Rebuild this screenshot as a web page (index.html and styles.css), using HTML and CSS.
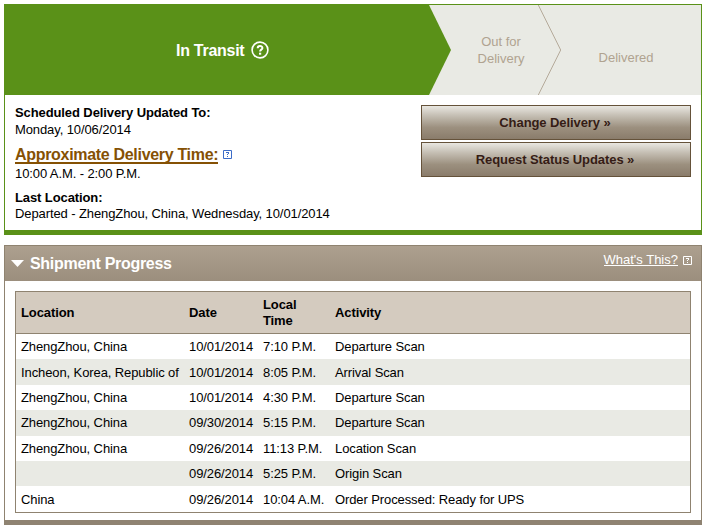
FILE: index.html
```html
<!DOCTYPE html>
<html lang="en">
<head>
<meta charset="utf-8">
<title>Tracking Detail</title>
<link rel="stylesheet" href="styles.css">
</head>
<body>
<section class="status">
  <header class="steps">
    <svg class="steps-shape" width="696" height="90" viewBox="0 0 696 90" aria-hidden="true">
      <path d="M0 0H424L446 45L424 90H0Z" fill="#5a9118"/>
      <path d="M533.3 0L555.7 45L533.3 90" fill="none" stroke="#b5aa9a"/>
    </svg>
    <div class="step step-current"><span class="step-name">In Transit</span>
      <svg class="help-round" width="18" height="18" viewBox="0 0 18 18" aria-hidden="true">
        <circle cx="9" cy="9" r="7.9" fill="none" stroke="#fff" stroke-width="1.6"/>
        <path d="M6.7 7.2C6.7 4.2 11.4 4.3 11.4 6.9C11.4 8.7 9.1 8.5 9.1 10.5" fill="none" stroke="#fff" stroke-width="2"/>
        <path d="M8 11.7h2.2v2H8z" fill="#fff"/>
      </svg>
    </div>
    <div class="step step-out">Out for<br>Delivery</div>
    <div class="step step-done">Delivered</div>
  </header>
  <div class="status-body">
    <div class="details">
      <b class="label scheduled">Scheduled Delivery Updated To:</b>
      <span class="value day">Monday, 10/06/2014</span>
      <div class="approx"><a class="approx-link">Approximate Delivery Time:</a>
        <svg class="help-box" width="9" height="9" viewBox="0 0 9 9" aria-hidden="true"><path d="M.5.5h8v8h-8z" fill="#fff" stroke="#3c6cc8"/><path d="M3 2h3v1H3zM5 3h1v1H5zM4 4h1v1H4zM4 6h1v1H4z" fill="#3c6cc8"/></svg>
      </div>
      <span class="value hours">10:00 A.M. - 2:00 P.M.</span>
      <b class="label last">Last Location:</b>
      <span class="value departed">Departed - ZhengZhou, China, Wednesday, 10/01/2014</span>
    </div>
    <div class="actions">
      <button class="action change">Change Delivery »</button>
      <button class="action request">Request Status Updates »</button>
    </div>
  </div>
</section>
<section class="progress">
  <header class="progress-head">
    <svg class="arrow" width="13" height="7" viewBox="0 0 13 7" aria-hidden="true"><path d="M0 0h13L6.5 7z" fill="#fff"/></svg>
    <h2 class="title">Shipment Progress</h2>
    <a class="whats">What's This?</a>
    <svg class="help-box" width="9" height="9" viewBox="0 0 9 9" aria-hidden="true"><path d="M.5.5h8v8h-8z" fill="none" stroke="#fff"/><path d="M3 2h3v1H3zM5 3h1v1H5zM4 4h1v1H4zM4 6h1v1H4z" fill="#fff"/></svg>
  </header>
  <table class="scans">
    <colgroup><col class="c-location"><col class="c-date"><col class="c-time"><col></colgroup>
    <thead><tr><th>Location</th><th>Date</th><th>Local<br>Time</th><th>Activity</th></tr></thead>
    <tbody>
      <tr><td>ZhengZhou, China</td><td>10/01/2014</td><td>7:10 P.M.</td><td>Departure Scan</td></tr>
      <tr class="tall"><td>Incheon, Korea, Republic of</td><td>10/01/2014</td><td>8:05 P.M.</td><td>Arrival Scan</td></tr>
      <tr><td>ZhengZhou, China</td><td>10/01/2014</td><td>4:30 P.M.</td><td>Departure Scan</td></tr>
      <tr class="tall upper"><td>ZhengZhou, China</td><td>09/30/2014</td><td>5:15 P.M.</td><td>Departure Scan</td></tr>
      <tr><td>ZhengZhou, China</td><td>09/26/2014</td><td>11:13 P.M.</td><td>Location Scan</td></tr>
      <tr><td></td><td>09/26/2014</td><td>5:25 P.M.</td><td>Origin Scan</td></tr>
      <tr class="tall"><td>China</td><td>09/26/2014</td><td>10:04 A.M.</td><td>Order Processed: Ready for UPS</td></tr>
    </tbody>
  </table>
</section>
</body>
</html>
```
FILE: styles.css
```css
* { box-sizing: border-box; }
body {
  margin: 0;
  padding: 4px 2px 0 4px;
  background: #fff;
  color: #000;
  font: 13px/17px "Liberation Sans", Arial, sans-serif;
  letter-spacing: -0.1px;
}
svg { display: block; flex: none; }
.status {
  height: 231px;
  border: 1px solid #5a9118;
  border-bottom-width: 5px;
}
.steps {
  position: relative;
  display: flex;
  height: 90px;
  background: #e9eae4;
  color: #b0a390;
  letter-spacing: 0;
}
.steps-shape { position: absolute; inset: 0; }
.step { position: relative; text-align: center; }
.step-current {
  display: flex;
  align-items: center;
  width: 446px;
  padding-left: 171px;
  gap: 7px;
  color: #fff;
  font-size: 16px;
  font-weight: bold;
  letter-spacing: -0.27px;
}
.step-out { width: 100px; padding: 28px 0 0; }
.step-done { width: 150px; padding: 44px 0 0; }
.status-body { display: flex; justify-content: space-between; padding: 9px 10px 0; }
.details { display: flex; flex-direction: column; align-items: flex-start; }
.approx { display: flex; align-items: center; gap: 5px; margin: 7px 0 1px; height: 19px; }
.approx-link {
  height: 19px;
  border-bottom: 2px solid #855104;
  color: #855104;
  font-size: 16px;
  font-weight: bold;
  line-height: 19px;
  letter-spacing: -0.31px;
}
.last { margin-top: 7px; }
.departed { margin-top: -1px; }
.actions { display: flex; flex-direction: column; gap: 2px; width: 270px; padding-top: 1px; }
.action {
  height: 35px;
  padding: 0 2px 0 0;
  border: 1px solid #65523a;
  background: linear-gradient(#e9e7e1, #c6c0b5 28%, #9c907f 65%, #8a7c6b);
  color: #351c15;
  font: bold 13px/17px "Liberation Sans", Arial, sans-serif;
  letter-spacing: -0.08px;
}
.progress {
  height: 280px;
  margin-top: 10px;
  border: 1px solid #8f8370;
  border-bottom: 5px solid #8f8372;
}
.progress-head {
  display: flex;
  height: 35px;
  padding: 0 9px 0 6px;
  background: linear-gradient(#ada08f, #9b8e7d);
  color: #fff;
  letter-spacing: 0;
}
.arrow { margin: 14px 6px 0 0; }
.title { margin: 8px 0 0; font-size: 16px; line-height: 19px; letter-spacing: -0.3px; }
.whats { height: 15px; margin: 5px 5px 0 auto; border-bottom: 1px solid #fff; }
.progress-head .help-box { margin-top: 10px; }
.scans {
  width: 676px;
  margin: 10px;
  border: 1px solid #8f8370;
  border-spacing: 0;
  table-layout: fixed;
}
.c-location { width: 168px; }
.c-date { width: 74px; }
.c-time { width: 72px; }
.scans th, .scans td { padding: 0 0 0 5px; text-align: left; white-space: nowrap; }
.scans th { height: 42px; border-bottom: 1px solid #8f8370; background: #d4cbbf; line-height: 16px; }
.scans td { height: 25px; }
.scans .tall td { height: 26px; }
.scans .upper td { padding-bottom: 2px; }
.scans tbody tr:nth-child(even) { background: #e9eae4; }
```
